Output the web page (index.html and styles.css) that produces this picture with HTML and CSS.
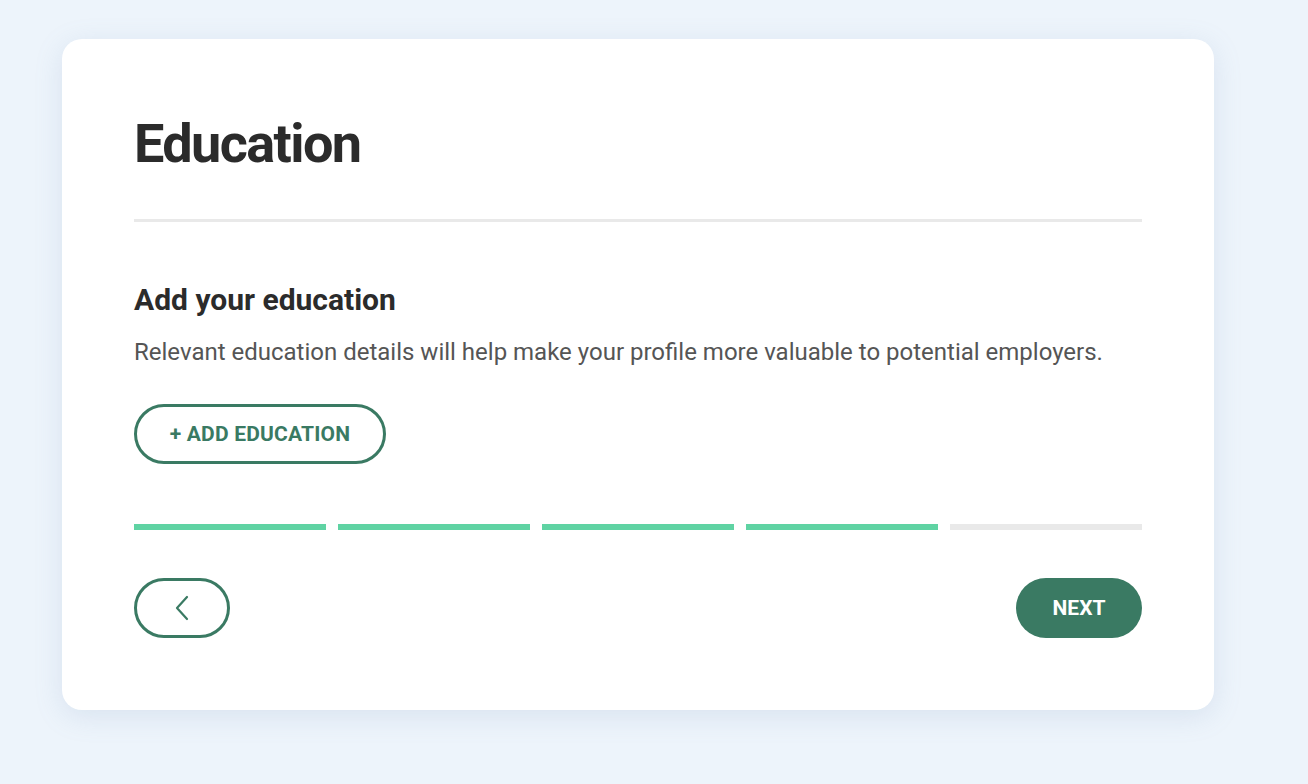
FILE: index.html
```html
<!DOCTYPE html>
<html lang="en">
<head>
<meta charset="utf-8">
<title>Education</title>
<link rel="stylesheet" href="styles.css">
</head>
<body>
<main class="card">
  <h1 class="title">Education</h1>
  <hr class="divider">
  <section class="section">
    <h2 class="subtitle">Add your education</h2>
    <p class="desc">Relevant education details will help make your profile more valuable to potential employers.</p>
    <button class="btn-outline add-btn" type="button">+ ADD EDUCATION</button>
  </section>
  <div class="progress">
    <span class="seg done"></span>
    <span class="seg done"></span>
    <span class="seg done"></span>
    <span class="seg done"></span>
    <span class="seg"></span>
  </div>
  <div class="nav">
    <button class="btn-outline back-btn" type="button" aria-label="Back">
      <svg width="16" height="26" viewBox="0 0 16 26"><path d="M13 2 L3 13 L13 24" fill="none" stroke="#3a7a63" stroke-width="2.2" stroke-linecap="round" stroke-linejoin="round"/></svg>
    </button>
    <button class="btn-solid" type="button">NEXT</button>
  </div>
</main>
</body>
</html>
```
FILE: styles.css
```css
* { box-sizing: border-box; }
html, body { margin: 0; padding: 0; }
body {
  background: #edf4fb;
  font-family: Roboto, "Liberation Sans", Arial, sans-serif;
  color: #2b2b2b;
  padding: 39px 0 0 62px;
  min-height: 784px;
}
.card {
  width: 1152px;
  height: 671px;
  background: #ffffff;
  border-radius: 20px;
  box-shadow: 0 6px 28px rgba(120, 150, 190, 0.18);
  padding: 70px 72px 0 72px;
  display: flex;
  flex-direction: column;
}
.title {
  margin: 0;
  font-family: Roboto, sans-serif;
  font-weight: 700;
  font-size: 54px;
  line-height: 70px;
  letter-spacing: -1.6px;
  color: #2b2b2b;
}
.divider {
  margin: 40px 0 0 0;
  border: 0;
  height: 3px;
  background: #e9e9e9;
}
.section { margin-top: 60px; }
.subtitle {
  margin: 0;
  font-size: 30px;
  line-height: 36px;
  font-weight: 700;
  color: #2b2b2b;
}
.desc {
  margin: 18px 0 0 0;
  font-size: 24px;
  line-height: 32px;
  color: #555555;
}
.btn-outline {
  background: #fff;
  border: 3px solid #3a7a63;
  border-radius: 30px;
  height: 60px;
  color: #3a7a63;
  font-family: Roboto, sans-serif;
  font-weight: 700;
  cursor: pointer;
  display: flex;
  align-items: center;
  justify-content: center;
}
.add-btn {
  margin-top: 36px;
  width: 252px;
  font-size: 21px;
  letter-spacing: 0.2px;
}
.progress {
  margin-top: 60px;
  display: flex;
  gap: 12px;
}
.seg {
  flex: 1;
  height: 6px;
  background: #e9e9e9;
}
.seg.done { background: #5fd3a3; }
.nav {
  margin-top: 48px;
  display: flex;
  justify-content: space-between;
  align-items: center;
}
.back-btn { width: 96px; padding: 0; }
.btn-solid {
  width: 126px;
  height: 60px;
  border: 0;
  border-radius: 30px;
  background: #3a7a63;
  color: #fff;
  font-family: Roboto, sans-serif;
  font-weight: 700;
  font-size: 21px;
  cursor: pointer;
}
```
